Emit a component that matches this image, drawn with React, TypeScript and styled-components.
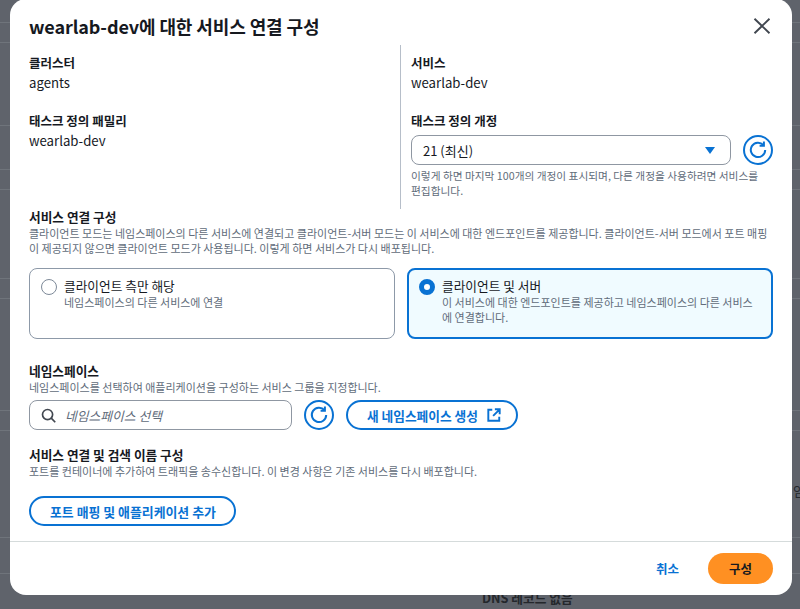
import React from "react";
import styled, { createGlobalStyle } from "styled-components";

const Global = createGlobalStyle`
  html, body { margin: 0; padding: 0; width: 800px; height: 609px; overflow: hidden; }
  * { box-sizing: border-box; }
  body { font-family: "Noto Sans CJK KR", "Noto Sans", sans-serif; color: #16191f; }
`;

const Page = styled.div`
  position: relative;
  width: 800px;
  height: 609px;
  overflow: hidden;
  background: #5f636b;
`;

const BackdropLine = styled.div<{ $gap: number }>`
  height: 1px;
  margin-top: ${(p) => p.$gap}px;
  background: #6f747b;
`;

const BackdropText = styled.div`
  position: absolute;
  left: 482px;
  top: 588px;
  font-size: 12.7px;
  font-weight: 700;
  color: #24272c;
  white-space: nowrap;
`;

const BackdropSide = styled.div`
  position: absolute;
  left: 781px;
  top: 481px;
  font-size: 13px;
  color: #24272c;
  white-space: nowrap;
`;

const Modal = styled.section`
  position: absolute;
  left: 10px;
  top: -1px;
  width: 782px;
  height: 596px;
  background: #fff;
  border-radius: 16px;
  display: flex;
  flex-direction: column;
  overflow: hidden;
`;

const Body = styled.div`
  flex: 1;
  padding: 13px 19px 0;
  min-height: 0;
`;

const Header = styled.header`
  display: flex;
  justify-content: space-between;
  align-items: center;
  height: 28px;
  margin-bottom: 5px;
`;

const Title = styled.h2`
  margin: 0;
  font-size: 18px;
  font-weight: 700;
  letter-spacing: -0.1px;
  color: #16191f;
`;

const CloseButton = styled.button`
  border: 0;
  background: none;
  padding: 0;
  width: 20px;
  height: 20px;
  margin-right: 1px;
  display: flex;
  color: #414750;
`;

const Columns = styled.div`
  display: grid;
  grid-template-columns: 371px 1fr;
  height: 164px;
`;

const LeftColumn = styled.div`
  display: flex;
  flex-direction: column;
  gap: 18px;
  padding-top: 8px;
`;

const RightColumn = styled.div`
  display: flex;
  flex-direction: column;
  gap: 18px;
  border-left: 1px solid #b6bec9;
  padding: 8px 0 0 10px;
`;

const Field = styled.div`
  display: flex;
  flex-direction: column;
`;

const Label = styled.div`
  font-size: 12.5px;
  line-height: 20px;
  font-weight: 700;
  color: #16191f;
`;

const Value = styled.div`
  font-size: 13.2px;
  line-height: 20px;
  color: #16191f;
`;

const Row = styled.div`
  display: flex;
  align-items: center;
  gap: 12px;
`;

const SelectRow = styled(Row)`
  margin-top: 4px;
`;

const SelectBox = styled.div`
  flex: 1;
  height: 30px;
  border: 1px solid #8f97a2;
  border-radius: 8px;
  display: flex;
  align-items: center;
  justify-content: space-between;
  padding: 0 12px 0 11px;
  font-size: 13px;
  color: #16191f;
`;

const Caret = styled.span`
  width: 0;
  height: 0;
  border-left: 5px solid transparent;
  border-right: 5px solid transparent;
  border-top: 7px solid #0972d3;
  margin-right: 3px;
`;

const RoundIconButton = styled.button`
  width: 30px;
  height: 30px;
  flex: none;
  border: 2px solid #0972d3;
  border-radius: 50%;
  background: #fff;
  color: #0972d3;
  display: flex;
  align-items: center;
  justify-content: center;
  padding: 0;
`;

const Hint = styled.div`
  font-size: 11px;
  line-height: 15px;
  color: #616c7a;
`;

const FieldHint = styled(Hint)`
  margin-top: 3px;
  font-size: 10.7px;
  word-break: keep-all;
`;

const SectionTitle = styled.div`
  font-size: 12.7px;
  line-height: 16px;
  margin-bottom: 0.5px;
  font-weight: 700;
  color: #16191f;
`;

const Cards = styled.div`
  display: grid;
  grid-template-columns: 366px 366px;
  gap: 12px;
  margin-top: 12.5px;
`;

const Card = styled.div<{ $active?: boolean }>`
  height: 71px;
  border-radius: 8px;
  border: ${(p) => (p.$active ? "2px solid #0972d3" : "1px solid #8d99a8")};
  background: ${(p) => (p.$active ? "#f0fbff" : "#fff")};
  padding: ${(p) => (p.$active ? "7px 10px" : "8px 11px")};
  display: flex;
  gap: 7px;
`;

const Radio = styled.span<{ $active?: boolean }>`
  width: 16px;
  height: 16px;
  flex: none;
  margin-top: 2px;
  border-radius: 50%;
  background: #fff;
  border: ${(p) => (p.$active ? "5px solid #0972d3" : "1px solid #7d8998")};
`;

const CardText = styled.div`
  display: flex;
  flex-direction: column;
`;

const CardTitle = styled.div`
  font-size: 12.7px;
  line-height: 18px;
  color: #16191f;
`;

const Section = styled.div<{ $top: number }>`
  margin-top: ${(p) => p.$top}px;
`;

const SearchBox = styled.div`
  width: 263px;
  height: 30px;
  border: 1px solid #8f97a2;
  border-radius: 8px;
  display: flex;
  align-items: center;
  gap: 9px;
  padding: 0 11px;
  color: #414750;
`;

const Placeholder = styled.span`
  font-size: 12.8px;
  font-style: italic;
  color: #5f6b7a;
`;

const SearchRow = styled(Row)`
  margin-top: 5.5px;
`;

const OutlineButton = styled.button`
  height: 30px;
  border: 2px solid #0972d3;
  border-radius: 16px;
  background: #fff;
  color: #0972d3;
  font-family: inherit;
  font-size: 12.7px;
  font-weight: 700;
  display: inline-flex;
  align-items: center;
  gap: 9px;
  padding: 0 15px 0 19px;
`;

const AddButton = styled(OutlineButton)`
  margin-top: 17.5px;
  font-size: 12.9px;
  padding: 0 18px 0 19px;
`;

const Footer = styled.footer`
  height: 54px;
  flex: none;
  border-top: 1px solid #d5dbdb;
  display: flex;
  align-items: center;
  justify-content: flex-end;
  gap: 29px;
  padding: 0 19px 0 0;
`;

const CancelButton = styled.button`
  border: 0;
  background: none;
  padding: 0;
  font-family: inherit;
  font-size: 12.5px;
  font-weight: 700;
  color: #0972d3;
`;

const PrimaryButton = styled.button`
  width: 65px;
  height: 31px;
  border: 0;
  border-radius: 16px;
  background: #ff9022;
  font-family: inherit;
  font-size: 12.5px;
  font-weight: 700;
  color: #16191f;
`;

const Refresh = () => (
  <svg width="20" height="20" viewBox="0 0 20 20" fill="none" stroke="currentColor" strokeWidth="2">
    <path d="M15.5 5.2A7.2 7.2 0 1 0 17.2 10" />
    <path d="M15.9 1.5v4.3h-4.3" />
  </svg>
);

const lineGaps = [22, 19, 82, 43, 19, 88, 19, 111, 19, 106, 35];

export default function App() {
  return (
    <Page>
      <Global />
      {lineGaps.map((g, i) => (
        <BackdropLine key={i} $gap={g} />
      ))}
      <BackdropText>DNS 레코드 없음</BackdropText>
      <BackdropSide>비임</BackdropSide>
      <Modal>
        <Body>
          <Header>
            <Title>wearlab-dev에 대한 서비스 연결 구성</Title>
            <CloseButton aria-label="닫기">
              <svg width="20" height="20" viewBox="0 0 20 20" fill="none" stroke="currentColor" strokeWidth="1.9">
                <path d="M2.5 2.8l15 14.4M17.5 2.8L2.5 17.2" />
              </svg>
            </CloseButton>
          </Header>
          <Columns>
            <LeftColumn>
              <Field>
                <Label>클러스터</Label>
                <Value>agents</Value>
              </Field>
              <Field>
                <Label>태스크 정의 패밀리</Label>
                <Value>wearlab-dev</Value>
              </Field>
            </LeftColumn>
            <RightColumn>
              <Field>
                <Label>서비스</Label>
                <Value>wearlab-dev</Value>
              </Field>
              <Field>
                <Label>태스크 정의 개정</Label>
                <SelectRow>
                  <SelectBox>
                    21 (최신)
                    <Caret />
                  </SelectBox>
                  <RoundIconButton aria-label="새로 고침">
                    <Refresh />
                  </RoundIconButton>
                </SelectRow>
                <FieldHint>이렇게 하면 마지막 100개의 개정이 표시되며, 다른 개정을 사용하려면 서비스를 편집합니다.</FieldHint>
              </Field>
            </RightColumn>
          </Columns>
          <SectionTitle>서비스 연결 구성</SectionTitle>
          <Hint>
            클라이언트 모드는 네임스페이스의 다른 서비스에 연결되고 클라이언트-서버 모드는 이 서비스에 대한 엔드포인트를 제공합니다. 클라이언트-서버 모드에서 포트 매핑이 제공되지 않으면 클라이언트 모드가 사용됩니다. 이렇게 하면 서비스가 다시 배포됩니다.
          </Hint>
          <Cards>
            <Card>
              <Radio />
              <CardText>
                <CardTitle>클라이언트 측만 해당</CardTitle>
                <Hint>네임스페이스의 다른 서비스에 연결</Hint>
              </CardText>
            </Card>
            <Card $active>
              <Radio $active />
              <CardText>
                <CardTitle>클라이언트 및 서버</CardTitle>
                <Hint>이 서비스에 대한 엔드포인트를 제공하고 네임스페이스의 다른 서비스에 연결합니다.</Hint>
              </CardText>
            </Card>
          </Cards>
          <Section $top={24}>
            <SectionTitle>네임스페이스</SectionTitle>
            <Hint>네임스페이스를 선택하여 애플리케이션을 구성하는 서비스 그룹을 지정합니다.</Hint>
            <SearchRow>
              <SearchBox>
                <svg width="15" height="15" viewBox="0 0 16 16" fill="none" stroke="currentColor" strokeWidth="1.8">
                  <circle cx="7" cy="7" r="5.4" />
                  <path d="M10.9 10.9L15.2 15.2" />
                </svg>
                <Placeholder>네임스페이스 선택</Placeholder>
              </SearchBox>
              <RoundIconButton aria-label="새로 고침">
                <Refresh />
              </RoundIconButton>
              <OutlineButton>
                새 네임스페이스 생성
                <svg width="14" height="14" viewBox="0 0 16 16" fill="none" stroke="currentColor" strokeWidth="2.2">
                  <path d="M6 2H1.5v12.5H14V10M9 1.5h5.5V7M14.5 1.5L7 9" />
                </svg>
              </OutlineButton>
            </SearchRow>
          </Section>
          <Section $top={17}>
            <SectionTitle>서비스 연결 및 검색 이름 구성</SectionTitle>
            <Hint>포트를 컨테이너에 추가하여 트래픽을 송수신합니다. 이 변경 사항은 기존 서비스를 다시 배포합니다.</Hint>
            <AddButton>포트 매핑 및 애플리케이션 추가</AddButton>
          </Section>
        </Body>
        <Footer>
          <CancelButton>취소</CancelButton>
          <PrimaryButton>구성</PrimaryButton>
        </Footer>
      </Modal>
    </Page>
  );
}
